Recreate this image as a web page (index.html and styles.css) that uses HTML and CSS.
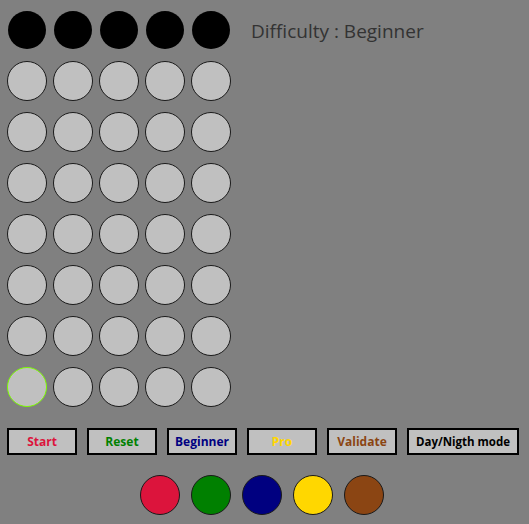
FILE: index.html
```html
<!DOCTYPE html>
<html>
<head>
<meta charset="utf-8">
<link rel="stylesheet" href="styles.css">
</head>
<body>
<div class="top">
  <div class="board">
    <div class="row secret">
      <span class="slot"><span class="peg black"></span></span>
      <span class="slot"><span class="peg black"></span></span>
      <span class="slot"><span class="peg black"></span></span>
      <span class="slot"><span class="peg black"></span></span>
      <span class="slot"><span class="peg black"></span></span>
    </div>
    <div class="row"><span class="hole"></span><span class="hole"></span><span class="hole"></span><span class="hole"></span><span class="hole"></span></div>
    <div class="row"><span class="hole"></span><span class="hole"></span><span class="hole"></span><span class="hole"></span><span class="hole"></span></div>
    <div class="row"><span class="hole"></span><span class="hole"></span><span class="hole"></span><span class="hole"></span><span class="hole"></span></div>
    <div class="row"><span class="hole"></span><span class="hole"></span><span class="hole"></span><span class="hole"></span><span class="hole"></span></div>
    <div class="row"><span class="hole"></span><span class="hole"></span><span class="hole"></span><span class="hole"></span><span class="hole"></span></div>
    <div class="row"><span class="hole"></span><span class="hole"></span><span class="hole"></span><span class="hole"></span><span class="hole"></span></div>
    <div class="row"><span class="hole active"></span><span class="hole"></span><span class="hole"></span><span class="hole"></span><span class="hole"></span></div>
  </div>
  <div class="difficulty">Difficulty : Beginner</div>
</div>
<div class="buttons">
  <button class="btn start">Start</button>
  <button class="btn reset">Reset</button>
  <button class="btn beginner">Beginner</button>
  <button class="btn pro">Pro</button>
  <button class="btn validate">Validate</button>
  <button class="btn mode">Day/Nigth mode</button>
</div>
<div class="palette">
  <span class="color crimson"></span>
  <span class="color green"></span>
  <span class="color navy"></span>
  <span class="color gold"></span>
  <span class="color brown"></span>
</div>
</body>
</html>
```
FILE: styles.css
```css
html, body {
  margin: 0;
  padding: 0;
  background: #808080;
  height: 100%;
}
body {
  padding: 10px 0 0 7px;
  box-sizing: border-box;
  width: 529px;
  font-family: "Open Sans", "DejaVu Sans", sans-serif;
}
.top {
  display: flex;
  align-items: flex-start;
}
.board {
  display: flex;
  flex-direction: column;
  gap: 11px;
}
.row {
  display: flex;
  gap: 6px;
}
.slot {
  width: 40px;
  height: 40px;
  display: flex;
  align-items: center;
  justify-content: center;
}
.peg.black {
  width: 38px;
  height: 38px;
  border-radius: 50%;
  background: #000;
}
.hole {
  width: 40px;
  height: 40px;
  box-sizing: border-box;
  border: 1px solid #1a1a1a;
  border-radius: 50%;
  background: #c0c0c0;
}
.hole.active {
  border-color: #7cfc00;
}
.difficulty {
  margin: 11px 0 0 20px;
  font-size: 19px;
  line-height: 20px;
  color: #333333;
}
.buttons {
  display: flex;
  gap: 10px;
  margin-top: 21px;
}
.btn {
  height: 27px;
  width: 70px;
  box-sizing: border-box;
  border: 2px solid #000;
  background: #c0c0c0;
  font-family: "Open Sans", "DejaVu Sans", sans-serif;
  font-weight: bold;
  font-size: 12px;
  padding: 0;
  margin: 0;
  white-space: nowrap;
}
.btn.mode {
  width: 112px;
  font-size: 11.5px;
}
.start { color: #dc143c; }
.reset { color: #008000; }
.beginner { color: #000080; }
.pro { color: #ffd700; }
.validate { color: #8b4513; }
.mode { color: #000; }
.palette {
  display: flex;
  justify-content: center;
  gap: 11px;
  margin: 20px 0 0 -12px;
}
.color {
  width: 40px;
  height: 40px;
  box-sizing: border-box;
  border: 1px solid #1a1a1a;
  border-radius: 50%;
}
.crimson { background: #dc143c; }
.green { background: #008000; }
.navy { background: #000080; }
.gold { background: #ffd700; }
.brown { background: #8b4513; }
```
